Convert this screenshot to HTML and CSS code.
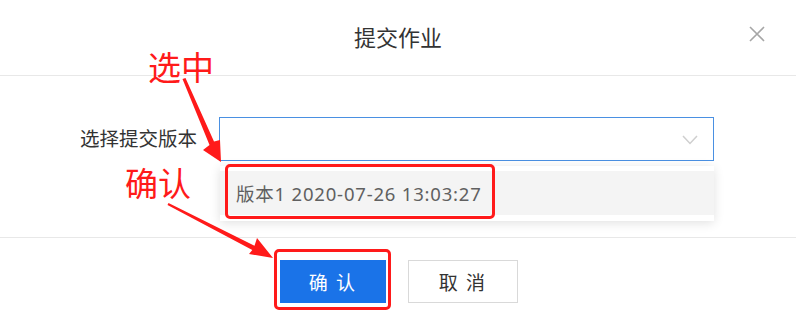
FILE: index.html
```html
<!DOCTYPE html>
<html lang="zh">
<head>
<meta charset="utf-8">
<link rel="stylesheet" href="styles.css">
</head>
<body>
<div class="dialog">
  <header class="dlg-header">
    <span class="spacer"></span>
    <h2 class="title">提交作业</h2>
    <button class="close" aria-label="关闭">
      <svg width="16" height="16" viewBox="0 0 16 16"><path d="M1 1 L15 15 M15 1 L1 15" stroke="#a6a6a6" stroke-width="1.6" fill="none"/></svg>
    </button>
  </header>
  <main class="dlg-body">
    <div class="form-row">
      <label class="label">选择提交版本</label>
      <div class="select">
        <div class="select-input">
          <svg class="chevron" width="16" height="10" viewBox="0 0 16 10"><path d="M1 1 L8 8.5 L15 1" stroke="#cfcfcf" stroke-width="1.5" fill="none"/></svg>
        </div>
        <div class="dropdown">
          <div class="option">版本1 2020-07-26 13:03:27</div>
        </div>
      </div>
    </div>
  </main>
  <footer class="dlg-footer">
    <button class="btn btn-primary">确 认</button>
    <button class="btn">取 消</button>
  </footer>
  <div class="annot">
    <span class="annot-text a1">选中</span>
    <span class="annot-text a2">确认</span>
    <span class="annot-box b1"></span>
    <span class="annot-box b2"></span>
    <svg class="arrows" width="796" height="326" viewBox="0 0 796 326">
      <polygon fill="#ff1a1a" points="182.5,79 185.5,78 214,141.5 220,140 221,162 203,150 209.5,145"/>
      <polygon fill="#ff1a1a" points="168.5,203.1 254.5,245.7 257,238 273,258 249,254 252.3,250.1 167.5,204.9"/>
    </svg>
  </div>
</div>
</body>
</html>
```

FILE: styles.css
```css
* { box-sizing: border-box; }
html, body {
  margin: 0;
  padding: 0;
  background: #fff;
}
body {
  font-family: "Noto Sans CJK SC", "Noto Sans", sans-serif;
  color: #333;
}
.dialog {
  position: relative;
  width: 796px;
  height: 326px;
  background: #fff;
  overflow: hidden;
}
.dlg-header {
  height: 76px;
  border-bottom: 1px solid #e8e8e8;
  display: grid;
  grid-template-columns: 1fr auto 1fr;
  align-items: center;
  padding: 0 31px;
}
.title {
  margin: 0;
  font-size: 22px;
  font-weight: 400;
  color: #333;
  line-height: 1;
  padding-bottom: 4px;
}
.close {
  justify-self: end;
  border: 0;
  background: none;
  padding: 0;
  width: 16px;
  height: 16px;
  display: flex;
  margin-bottom: 7px;
}
.dlg-body {
  height: 162px;
  border-bottom: 1px solid #e8e8e8;
  padding: 41px 0 0 80px;
}
.form-row {
  display: flex;
  align-items: center;
}
.label {
  width: 139px;
  font-size: 19.5px;
  color: #333;
  line-height: 1;
  padding-bottom: 2px;
}
.select {
  position: relative;
  width: 495px;
}
.select-input {
  height: 44px;
  border: 1px solid #4a90e2;
  display: flex;
  align-items: center;
  justify-content: flex-end;
  padding-right: 15px;
}
.chevron { margin-top: 2px; }
.dropdown {
  position: absolute;
  left: 1px;
  right: 0;
  top: 49px;
  background: #fff;
  padding: 5px 0 6px;
  box-shadow: 0 2px 10px rgba(0, 0, 0, 0.12);
}
.option {
  height: 44px;
  background: #f4f4f4;
  display: flex;
  align-items: center;
  padding-left: 16px;
  font-family: "Noto Sans", "Noto Sans CJK SC", sans-serif;
  font-size: 18.5px;
  letter-spacing: 0.8px;
  color: #606060;
}
.dlg-footer {
  display: flex;
  justify-content: center;
  gap: 22px;
  padding-top: 22px;
  padding-left: 2px;
}
.btn {
  width: 110px;
  height: 43px;
  border: 1px solid #d9d9d9;
  background: #fff;
  font-family: inherit;
  font-size: 19px;
  letter-spacing: 2px;
  color: #333;
  padding: 0;
}
.btn-primary {
  width: 106px;
  background: #1a73e8;
  border-color: #1a73e8;
  color: #fff;
}
.annot {
  position: absolute;
  inset: 0;
  pointer-events: none;
}
.annot-text {
  position: absolute;
  color: #ff1a1a;
  font-size: 33px;
  line-height: 1;
}
.a1 { left: 148px; top: 50px; }
.a2 { left: 125px; top: 166px; }
.annot-box {
  position: absolute;
  border: 3px solid #ff1a1a;
  border-radius: 5px;
}
.b1 { left: 225px; top: 164px; width: 270px; height: 55px; }
.b2 { left: 274px; top: 249px; width: 117px; height: 61px; }
.arrows {
  position: absolute;
  left: 0;
  top: 0;
}
```
